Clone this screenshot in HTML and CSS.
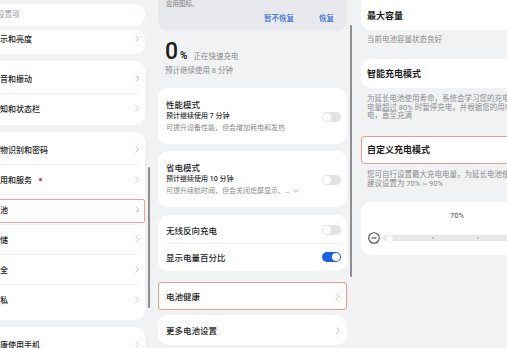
FILE: index.html
```html
<!DOCTYPE html>
<html lang="zh-CN">

<head>
    <meta charset="UTF-8">
    <meta name="viewport" content="width=device-width, initial-scale=1.0">
    <title>电池设置</title>
    <link rel="stylesheet" href="styles.css">
</head>

<body>
    <div class="screens">

        <!-- 设置列表 -->
        <section class="panel panel-list">
            <div class="list">
                <div class="search">搜索设置项</div>

                <div class="card card-cut">
                    <div class="row row-short">
                        <span class="label">显示和亮度</span>
                        <svg class="chev" viewBox="0 0 4 7"><path d="M0.5 0.5L3.5 3.5L0.5 6.5" /></svg>
                    </div>
                </div>

                <div class="card">
                    <div class="row">
                        <span class="label">声音和振动</span>
                        <svg class="chev" viewBox="0 0 4 7"><path d="M0.5 0.5L3.5 3.5L0.5 6.5" /></svg>
                    </div>
                    <div class="row">
                        <span class="label">通知和状态栏</span>
                        <svg class="chev" viewBox="0 0 4 7"><path d="M0.5 0.5L3.5 3.5L0.5 6.5" /></svg>
                    </div>
                </div>

                <div class="card card-long">
                    <div class="row">
                        <span class="label">生物识别和密码</span>
                        <svg class="chev" viewBox="0 0 4 7"><path d="M0.5 0.5L3.5 3.5L0.5 6.5" /></svg>
                    </div>
                    <div class="row">
                        <span class="label">应用和服务<i class="dot"></i></span>
                        <svg class="chev" viewBox="0 0 4 7"><path d="M0.5 0.5L3.5 3.5L0.5 6.5" /></svg>
                    </div>
                    <div class="row row-active">
                        <span class="label">电池</span>
                        <svg class="chev" viewBox="0 0 4 7"><path d="M0.5 0.5L3.5 3.5L0.5 6.5" /></svg>
                    </div>
                    <div class="row">
                        <span class="label">存储</span>
                        <svg class="chev" viewBox="0 0 4 7"><path d="M0.5 0.5L3.5 3.5L0.5 6.5" /></svg>
                    </div>
                    <div class="row">
                        <span class="label">安全</span>
                        <svg class="chev" viewBox="0 0 4 7"><path d="M0.5 0.5L3.5 3.5L0.5 6.5" /></svg>
                    </div>
                    <div class="row">
                        <span class="label">隐私</span>
                        <svg class="chev" viewBox="0 0 4 7"><path d="M0.5 0.5L3.5 3.5L0.5 6.5" /></svg>
                    </div>
                </div>

                <div class="card">
                    <div class="row">
                        <span class="label">健康使用手机</span>
                        <svg class="chev" viewBox="0 0 4 7"><path d="M0.5 0.5L3.5 3.5L0.5 6.5" /></svg>
                    </div>
                </div>
            </div>
            <div class="scrollbar scrollbar-list"></div>
        </section>

        <!-- 电池 -->
        <section class="panel panel-battery">
            <div class="notice">
                <p class="notice-text">应用图标。</p>
                <div class="notice-actions">
                    <span>暂不恢复</span>
                    <span>恢复</span>
                </div>
            </div>

            <div class="level">
                <div class="level-line">
                    <span class="level-num">0</span>
                    <span class="level-pct">%</span>
                    <span class="level-state">正在快速充电</span>
                </div>
                <p class="level-est">预计继续使用 8 分钟</p>
            </div>

            <div class="card mode mode-first">
                <div class="mode-text">
                    <p class="mode-title">性能模式</p>
                    <p class="mode-sub">预计继续使用 7 分钟</p>
                    <p class="mode-desc">可提升设备性能，但会增加耗电和发热</p>
                </div>
                <span class="toggle"></span>
            </div>

            <div class="card mode">
                <div class="mode-text">
                    <p class="mode-title">省电模式</p>
                    <p class="mode-sub">预计继续使用 10 分钟</p>
                    <p class="mode-desc">可提升续航时间，但会关闭熄屏显示、…<svg class="more" viewBox="0 0 7 4"><path d="M0.5 0.5L3.5 3.5L6.5 0.5" /></svg></p>
                </div>
                <span class="toggle"></span>
            </div>

            <div class="card switches">
                <div class="switch-row">
                    <span>无线反向充电</span>
                    <span class="toggle"></span>
                </div>
                <div class="switch-row">
                    <span>显示电量百分比</span>
                    <span class="toggle on"></span>
                </div>
            </div>

            <div class="card link link-active">
                <span>电池健康</span>
                <svg class="chev" viewBox="0 0 4 7"><path d="M0.5 0.5L3.5 3.5L0.5 6.5" /></svg>
            </div>

            <div class="card link link-last">
                <span>更多电池设置</span>
                <svg class="chev" viewBox="0 0 4 7"><path d="M0.5 0.5L3.5 3.5L0.5 6.5" /></svg>
            </div>

            <div class="scrollbar scrollbar-battery"></div>
        </section>

        <!-- 电池健康 -->
        <section class="panel panel-health">
            <div class="health">
                <div class="card head-card cap-card">最大容量</div>
                <p class="note note-first">当前电池容量状态良好</p>

                <div class="card head-card smart-card">智能充电模式</div>
                <p class="note note-multi">为延长电池使用寿命，系统会学习您的充电习惯，在<br>电量超过 80% 时暂停充电，并根据您的用电习惯充<br>电，直至充满</p>

                <div class="card head-card custom-card">自定义充电模式</div>
                <p class="note note-pair">您可自行设置最大充电电量，为延长电池使用寿命，<br>建议设置为 70% ~ 90%</p>

                <div class="card slider-card">
                    <p class="slider-value">70%</p>
                    <div class="slider-row">
                        <svg class="minus" viewBox="0 0 12 12">
                            <circle cx="6" cy="6" r="5.3" />
                            <path d="M3.4 6H8.6" />
                        </svg>
                        <div class="track">
                            <span class="knob"></span>
                            <i class="tick"></i>
                            <i class="tick"></i>
                        </div>
                    </div>
                </div>
            </div>
        </section>

    </div>
</body>

</html>
```

FILE: styles.css
```css
* {
    box-sizing: border-box;
    margin: 0;
    padding: 0;
}

body {
    width: 507px;
    height: 348px;
    overflow: hidden;
    background: #f1f2f4;
    font-family: Roboto, "Noto Sans CJK SC", sans-serif;
    color: #1c1c1e;
}

.screens {
    display: flex;
    height: 348px;
}

.panel {
    position: relative;
    flex: none;
    height: 348px;
    overflow: hidden;
}

.panel-list {
    width: 153px;
}

.panel-battery {
    width: 203px;
    padding-left: 5px;
}

.panel-health {
    width: 151px;
    padding-left: 5px;
}

.card {
    background: #fff;
    border-radius: 10px;
}

.chev {
    width: 4px;
    height: 7px;
    flex: none;
    fill: none;
    stroke: #c2c2c4;
    stroke-width: 0.9;
}

.scrollbar {
    position: absolute;
    width: 2px;
    border-radius: 1px;
    background: #8e8e91;
}

.scrollbar-list {
    left: 148px;
    top: 167px;
    height: 141px;
}

.scrollbar-battery {
    left: 197px;
    top: 25px;
    height: 252px;
}

/* settings list */
.list {
    width: 163px;
    margin-left: -18px;
    padding-top: 4px;
    display: flex;
    flex-direction: column;
    gap: 7px;
}

.search {
    height: 22px;
    border-radius: 11px;
    background: #fff;
    font-size: 7.5px;
    line-height: 22px;
    color: #9b9b9d;
}

.list .card {
    padding: 2px 0;
}

.list .card-cut {
    margin-top: -3px;
    padding: 0 0 8px;
}

.list .card-long {
    padding-bottom: 6px;
}

.row {
    display: flex;
    align-items: center;
    justify-content: space-between;
    height: 30px;
    margin-right: 6px;
    padding-left: 10px;
    font-size: 8px;
    font-weight: 500;
}

.row + .row {
    border-top: 1px solid #f0f0f2;
}

.row-short {
    height: 16px;
}

.label {
    display: flex;
    align-items: center;
}

.dot {
    width: 3px;
    height: 3px;
    margin-left: 7px;
    border-radius: 50%;
    background: #e8352b;
}

.row-active {
    position: relative;
}

.row-active::after {
    content: "";
    position: absolute;
    left: -2px;
    right: -6px;
    top: 4px;
    bottom: 1px;
    border: 1px solid #f2a091;
    border-radius: 2px;
}

/* battery */
.notice {
    width: 189px;
    margin-top: -10px;
    padding: 10px 13px 8px 8px;
    border-radius: 10px;
    background: #e8e9ec;
}

.notice-text {
    font-size: 6.5px;
    line-height: 8px;
    color: #7a7a7c;
}

.notice-actions {
    display: flex;
    justify-content: flex-end;
    gap: 25px;
    margin-top: 7px;
    font-size: 7.5px;
    line-height: 8px;
    font-weight: 500;
    color: #2c6fdc;
}

.level {
    margin-top: 9.5px;
    padding-left: 7px;
}

.level-line {
    display: flex;
    align-items: baseline;
    height: 22px;
    line-height: 22px;
}

.level-num {
    font-size: 23px;
    font-weight: 500;
}

.level-pct {
    margin-left: 2px;
    font-size: 10px;
    font-weight: 700;
}

.level-state {
    margin-left: 6px;
    font-size: 7.5px;
    color: #8a8a8c;
}

.level-est {
    margin-top: 3.5px;
    font-size: 7.5px;
    line-height: 10px;
    color: #8a8a8c;
}

.mode {
    width: 189px;
    display: flex;
    align-items: center;
    margin-top: 7px;
    padding: 12px 6px 10px 8px;
}

.mode-first {
    margin-top: 12px;
}

.mode-text {
    flex: 1;
}

.mode-title {
    font-size: 8.5px;
    line-height: 11px;
    font-weight: 500;
}

.mode-sub {
    font-size: 7px;
    line-height: 11px;
    font-weight: 500;
    color: #333;
}

.mode-desc {
    display: flex;
    align-items: center;
    font-size: 7px;
    line-height: 12px;
    color: #8a8a8c;
}

.more {
    width: 6px;
    height: 4px;
    margin-left: 3px;
    fill: none;
    stroke: #8a8a8c;
    stroke-width: 0.8;
}

.toggle {
    display: flex;
    flex: none;
    width: 19px;
    height: 10px;
    padding: 1px;
    border-radius: 5px;
    background: #e3e3e5;
}

.toggle::after {
    content: "";
    width: 8px;
    height: 8px;
    border-radius: 50%;
    background: #fff;
}

.toggle.on {
    justify-content: flex-end;
    background: #1a63e6;
}

.switches {
    width: 189px;
    margin-top: 8px;
    padding: 1px 0;
}

.switch-row {
    display: flex;
    align-items: center;
    justify-content: space-between;
    height: 27px;
    margin: 0 6px 0 8px;
    font-size: 8.5px;
    font-weight: 500;
}

.switch-row + .switch-row {
    border-top: 1px solid #eeeef0;
}

.link {
    width: 189px;
    height: 28px;
    display: flex;
    align-items: center;
    justify-content: space-between;
    margin-top: 11px;
    padding: 0 7px 0 8px;
    font-size: 8.5px;
    font-weight: 500;
}

.link-active {
    border: 1px solid #f09a8b;
    border-radius: 3px;
    padding-left: 7px;
}

.link-last {
    height: 30px;
    margin-top: 5px;
}

/* battery health */
.health {
    width: 192px;
}

.head-card {
    padding: 9px 6px 8px;
    font-size: 9px;
    line-height: 12px;
    font-weight: 700;
}

.cap-card {
    margin-top: -5px;
    padding-top: 15px;
}

.smart-card {
    margin-top: 14px;
}

.custom-card {
    margin-top: 15.5px;
    padding: 7px 5px;
    border: 1px solid #f09a8b;
    border-radius: 3px;
}

.note {
    padding-left: 6px;
    font-size: 7.5px;
    line-height: 10px;
    color: #8c8c8e;
    white-space: nowrap;
}

.note-first {
    margin-top: 5px;
}

.note-multi {
    margin-top: 7px;
    line-height: 8.5px;
}

.note-pair {
    margin-top: 5.5px;
    line-height: 9px;
}

.slider-card {
    margin-top: 14.5px;
    padding: 8px 0 11px;
}

.slider-value {
    text-align: center;
    font-size: 7.5px;
    line-height: 12px;
    color: #555;
}

.slider-row {
    display: flex;
    align-items: center;
    gap: 3px;
    height: 12px;
    margin-top: 10px;
    padding-left: 7px;
}

.minus {
    width: 12px;
    height: 12px;
    flex: none;
    fill: none;
    stroke: #4a4a4c;
    stroke-width: 1.1;
}

.track {
    flex: 1;
    display: flex;
    align-items: center;
    height: 6px;
    border-radius: 3px;
    background: #e8e8ea;
}

.knob {
    width: 7px;
    height: 7px;
    margin-left: 3px;
    border-radius: 50%;
    background: #fff;
    box-shadow: 0 0 1px rgba(0, 0, 0, 0.25);
}

.tick {
    width: 1.5px;
    height: 1.5px;
    border-radius: 50%;
    background: #bdbdc0;
}

.tick:first-of-type {
    margin-left: 39px;
}

.tick + .tick {
    margin-left: 43.5px;
}
```
